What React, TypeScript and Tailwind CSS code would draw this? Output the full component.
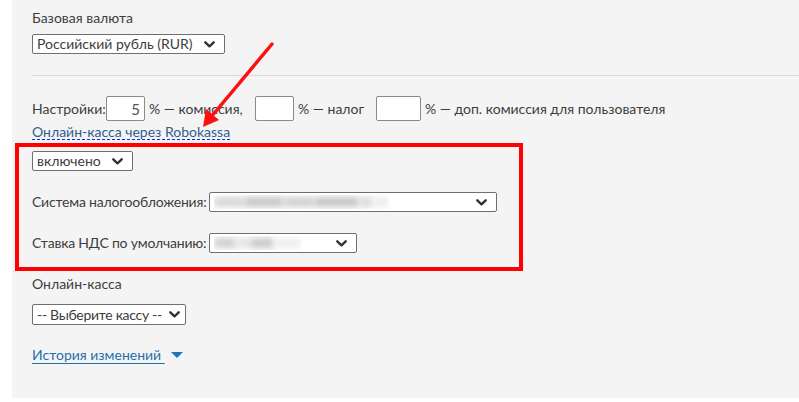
import React from "react";

const Chevron = () => (
  <svg width="11" height="7" viewBox="0 0 11 7" className="shrink-0">
    <path d="M1.3 1.3 L5.5 5.3 L9.7 1.3" fill="none" stroke="#333" strokeWidth="2.4" strokeLinecap="round" strokeLinejoin="round" />
  </svg>
);

function FakeSelect({ className, children }: { className: string; children: React.ReactNode }) {
  return (
    <div className={`flex items-center justify-between bg-white border border-[#6f6f6f] rounded-[2px] pl-[4px] pr-[9px] ${className}`}>
      <div className="flex items-center overflow-hidden whitespace-nowrap">{children}</div>
      <Chevron />
    </div>
  );
}

function Blur({ parts }: { parts: [number, string][] }) {
  return (
    <div className="flex items-center h-[14px]">
      {parts.map(([w, c], i) => (
        <div key={i} className="h-[10px] blur-[3px]" style={{ width: w, background: c }} />
      ))}
    </div>
  );
}

function NumInput({ className, value }: { className: string; value?: string }) {
  return (
    <div className={`h-[25px] bg-white border border-[#8a8a8a] rounded-[2px] flex items-center justify-end pr-[4px] text-[15px] text-[#555] ${className}`}>
      {value}
    </div>
  );
}

export default function App() {
  return (
    <div className="relative w-[799px] h-[402px] bg-white overflow-hidden" style={{ fontFamily: "Lato, 'Open Sans', sans-serif" }}>
      <div className="ml-[12px] h-[398px] bg-[#f4f4f4] pt-[10px] text-[14px] leading-[16px] text-[#3d3d3d]">
        <div className="pl-[20px]">
          <div>Базовая валюта</div>
          <FakeSelect className="mt-[8px] w-[193px] h-[20px]">
            <span>Российский рубль (RUR)</span>
          </FakeSelect>
        </div>
        <div className="ml-[20px] mt-[21px] border-t border-[#dcdcdc]" />
        <div className="pl-[20px]">
          <div className="mt-[20px] flex items-center h-[25px] whitespace-nowrap">
            <span className="w-[74px]">Настройки:</span>
            <NumInput className="w-[39px]" value="5" />
            <span className="w-[110px] pl-[4px]">% — комиссия,</span>
            <NumInput className="w-[39px]" />
            <span className="w-[82px] pl-[4px]">% — налог</span>
            <NumInput className="w-[45px]" />
            <span className="pl-[4px]">% — доп. комиссия для пользователя</span>
          </div>
          <div className="mt-[3px] flex">
            <span className="text-[#2f5f8c] border-b border-dashed border-[#2020ff] leading-[15px]">Онлайн-касса через Robokassa</span>
          </div>

          <FakeSelect className="mt-[11px] w-[101px] h-[20px]">
            <span>включено</span>
          </FakeSelect>

          <div className="mt-[21px] flex items-center h-[20px]">
            <span className="mr-[3px] whitespace-nowrap tracking-[-0.2px]">Система налогообложения:</span>
            <FakeSelect className="w-[288px] h-[20px]">
              <Blur parts={[[30, "#d6d6d6"], [40, "#c8c8c8"], [30, "#d0d0d0"], [45, "#c6c6c6"], [14, "#dadada"], [16, "#ededed"]]} />
            </FakeSelect>
          </div>

          <div className="mt-[21px] flex items-center h-[20px]">
            <span className="mr-[3px] whitespace-nowrap tracking-[-0.2px]">Ставка НДС по умолчанию:</span>
            <FakeSelect className="w-[148px] h-[20px]">
              <Blur parts={[[22, "#cfcfcf"], [14, "#e4e4e4"], [24, "#c9c9c9"], [28, "#efefef"]]} />
            </FakeSelect>
          </div>

          <div className="mt-[23px]">Онлайн-касса</div>

          <FakeSelect className="mt-[12px] w-[154px] h-[21px] !pr-[5px]">
            <span className="tracking-[-0.3px] pr-[2px]">-- Выберите кассу --</span>
          </FakeSelect>

          <div className="mt-[22px] flex items-center">
            <span className="text-[#1f6fae] underline underline-offset-[3px] decoration-[#1f6fae]">История изменений&nbsp;</span>
            <svg width="12" height="7" viewBox="0 0 12 7" className="ml-[6px]">
              <polygon points="0,0 12,0 6,6" fill="#1f75bb" />
            </svg>
          </div>
        </div>
      </div>

      {/* annotation overlay: red box */}
      <div className="absolute left-[15px] top-[143px] w-[508px] h-[128px] border-[4px] border-[#ff0000] pointer-events-none" />

      {/* annotation overlay: red arrow */}
      <svg className="absolute left-0 top-0 pointer-events-none" width="799" height="402" viewBox="0 0 799 402">
        <line x1="272" y1="44" x2="211" y2="117" stroke="#ff1010" strokeWidth="3.5" strokeLinecap="round" />
        <polygon points="203,127 206,109 219,120" fill="#ff1010" />
      </svg>
    </div>
  );
}
